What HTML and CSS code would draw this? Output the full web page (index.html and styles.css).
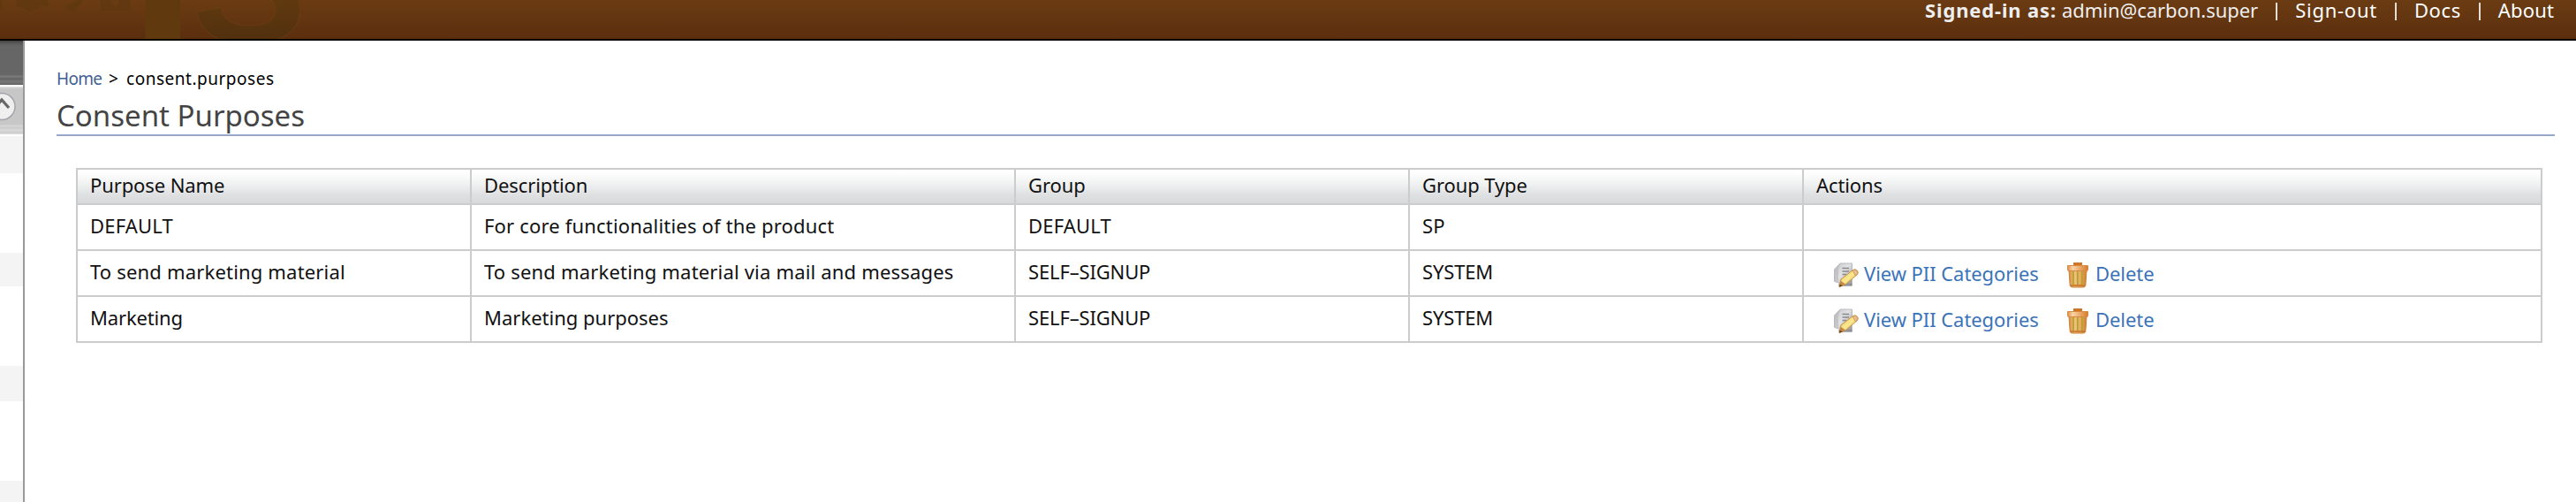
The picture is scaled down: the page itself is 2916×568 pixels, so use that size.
FILE: index.html
```
<!DOCTYPE html>
<html lang="en">
<head>
<meta charset="utf-8">
<title>Consent Purposes</title>
<link rel="stylesheet" href="styles.css">
</head>
<body>
<svg class="defs" width="0" height="0" aria-hidden="true">
  <defs>
    <linearGradient id="paper" x1="0" y1="0" x2="1" y2="1">
      <stop offset="0" stop-color="#c4c5c8"/><stop offset=".45" stop-color="#e2e2e4"/><stop offset="1" stop-color="#8d8f94"/>
    </linearGradient>
    <linearGradient id="pencil" x1="0" y1="0" x2="1" y2="1">
      <stop offset="0" stop-color="#e9c266"/><stop offset=".5" stop-color="#fbe88c"/><stop offset="1" stop-color="#cf9a48"/>
    </linearGradient>
    <linearGradient id="can" x1="0" y1="0" x2="1" y2="0">
      <stop offset="0" stop-color="#d58b3b"/><stop offset=".3" stop-color="#ecc67c"/><stop offset=".7" stop-color="#dfae57"/><stop offset="1" stop-color="#cc7c2e"/>
    </linearGradient>
    <linearGradient id="lid" x1="0" y1="0" x2="1" y2="0">
      <stop offset="0" stop-color="#dc8f4a"/><stop offset=".25" stop-color="#f9d3a6"/><stop offset="1" stop-color="#d67c2b"/>
    </linearGradient>
    <symbol id="icon-edit" viewBox="0 0 30 30">
      <path d="M8 2H21.500V27H8V24.500L1.500 22.500V9Z" fill="url(#paper)" stroke="#b9babd"/>
      <path d="M8 2L1.500 9V22L6 23V9Z" fill="#b4b5b9" opacity=".6"/>
      <path d="M10.500 7.500H18M10.500 11H18M10.500 14.500H15" stroke="#86888c" stroke-width="1.500"/>
      <path d="M6 25H21.500V28H6Z" fill="#77797d" opacity=".45"/>
      <path d="M7 28.500L9 20L22.500 9.500Q25 8 27 10T27.500 14.500L14.500 25.500Z" fill="url(#pencil)" stroke="#c88e42"/>
      <path d="M22 10Q25 8 27 10T27.500 14L25.500 16Z" fill="#e6bd8b" stroke="#c98c4c" stroke-width=".8"/>
      <path d="M7 28.500L8.500 21.500L14 25.500Z" fill="#c4894a"/>
      <path d="M7 28.800L7.800 25.500L10.800 27.500Z" fill="#6d3f1c"/>
    </symbol>
    <symbol id="icon-delete" viewBox="0 0 26 30">
      <path d="M3 10H23L21.800 27Q21.500 29 19 29H7Q4.500 29 4.200 27Z" fill="url(#can)" stroke="#cf8134"/>
      <path d="M8 11V26M12.800 11V26M17.800 11V26" stroke="#bd9b35" stroke-width="1.700"/>
      <path d="M5 27H21" stroke="#c97430" stroke-width="1.600"/>
      <path d="M8 1H18V5H8Z" fill="#cf7526"/>
      <path d="M1.500 4.500H24.500V9Q24.500 10.500 23 10.500H3Q1.500 10.500 1.500 9Z" fill="url(#lid)" stroke="#d88a44"/>
    </symbol>
  </defs>
</svg>

<header class="banner">
  <svg class="watermark" width="400" height="44" viewBox="0 0 400 44" aria-hidden="true">
    <defs>
      <linearGradient id="mark" gradientUnits="userSpaceOnUse" x1="0" y1="0" x2="0" y2="44">
        <stop offset="0" stop-color="#60390f"/><stop offset="1" stop-color="#52300e"/>
      </linearGradient>
    </defs>
    <g fill="#5e380f" fill-opacity=".7" stroke="#744516" stroke-opacity=".3">
      <path d="M-5 0H3V9L-1 15H-5Z"/>
      <path d="M18 -4H55V8L46 7L44 11L38 10L35 15L29 13L27 9L18 9Z"/>
      <path d="M72 6L84 2L88 -3H97L84 13Q78 14 75 10Z"/>
      <path d="M113 -3H148V9Q148 13 144 13H117Q113 13 113 9Z"/>
    </g>
    <path d="M127 -2H135V4L131 9L127 4Z" fill="#683b13"/>
    <text class="mark-i" transform="translate(146 48) scale(2.300 1)">I</text>
    <text class="mark-s" x="217" y="48">S</text>
  </svg>
  <nav class="session">
    <span class="user"><strong>Signed-in as:</strong><span class="account">admin@carbon.super</span></span>
    <i class="bar"></i><a class="sign-out">Sign-out</a>
    <i class="bar"></i><a class="docs">Docs</a>
    <i class="bar"></i><a class="about">About</a>
  </nav>
</header>

<div class="layout">
  <aside class="sidebar">
    <div class="side-head"></div>
    <div class="side-toggle">
      <svg width="26" height="56" viewBox="0 0 26 56">
        <circle cx="2" cy="22.500" r="15" fill="#efefef" stroke="#a5a6ad" stroke-width="1.500"/>
        <path d="M-6 24L2 15L10 24" fill="none" stroke="#666" stroke-width="3.200"/>
      </svg>
    </div>
    <div class="band first"></div>
    <div class="band"></div>
    <div class="band tall"></div>
    <div class="band"></div>
  </aside>

  <main class="content">
    <div class="crumbs"><a class="home">Home</a><span class="sep">&gt;</span><span class="here">consent.purposes</span></div>
    <h1>Consent Purposes</h1>
    <table class="purposes">
      <colgroup><col class="c-name"><col class="c-desc"><col class="c-group"><col class="c-type"><col></colgroup>
      <thead>
        <tr><th>Purpose Name</th><th>Description</th><th>Group</th><th>Group Type</th><th>Actions</th></tr>
      </thead>
      <tbody>
        <tr><td>DEFAULT</td><td>For core functionalities of the product</td><td>DEFAULT</td><td>SP</td><td></td></tr>
        <tr><td>To send marketing material</td><td>To send marketing material via mail and messages</td><td class="caps">SELF–SIGNUP</td><td class="caps">SYSTEM</td>
          <td class="actions"><div class="links"><a class="view"><svg width="30" height="30"><use href="#icon-edit"/></svg>View PII Categories</a><a class="delete"><svg width="26" height="30"><use href="#icon-delete"/></svg>Delete</a></div></td></tr>
        <tr><td class="caps">Marketing</td><td class="short">Marketing purposes</td><td class="caps">SELF–SIGNUP</td><td class="caps">SYSTEM</td>
          <td class="actions"><div class="links"><a class="view"><svg width="30" height="30"><use href="#icon-edit"/></svg>View PII Categories</a><a class="delete"><svg width="26" height="30"><use href="#icon-delete"/></svg>Delete</a></div></td></tr>
      </tbody>
    </table>
  </main>
</div>
</body>
</html>
```
FILE: styles.css
```
* { box-sizing: border-box; }

body {
  margin: 0;
  height: 568px;
  overflow: hidden;
  display: flex;
  flex-direction: column;
  background: #fff;
  color: #111;
  font: 22px "Noto Sans", "Open Sans", sans-serif;
}

.defs { display: block; height: 0; flex: none; }

.banner {
  flex: none;
  height: 46px;
  display: flex;
  justify-content: space-between;
  background: linear-gradient(#6b3c13, #5b2e0e);
  border-bottom: 2px solid #000;
}
.watermark { display: block; }
.mark-i, .mark-s {
  font-family: "Liberation Sans", sans-serif;
  font-weight: 700;
  fill: #59350f;
}
.mark-i { font-size: 120px; }
.mark-s { font-size: 195px; fill: url(#mark); stroke: #744516; stroke-opacity: 0.35; stroke-width: 1.5px; }
.mark-i { fill: url(#mark); }

.session {
  display: flex;
  align-items: flex-start;
  padding-right: 25px;
  color: #fff;
  line-height: 23px;
  white-space: nowrap;
}
.user { display: flex; gap: 6px; color: #eee; }
.user strong { letter-spacing: 0.85px; }
.account { letter-spacing: -0.05px; }
.bar { width: 2px; height: 20px; margin: 3px 20px 0; background: #e6ddd5; }
.sign-out { letter-spacing: 0.75px; }
.docs { letter-spacing: 0.6px; }
.about { letter-spacing: 0.15px; }

.layout { flex: 1; display: flex; min-height: 0; }

.sidebar {
  width: 28px;
  flex: none;
  border-right: 2px solid #999;
  overflow: hidden;
}
.side-head {
  height: 50px;
  background: linear-gradient(#404040 0, #5c5c5c 3px, #666 6px, #666 39px, #757575 39px, #757575 42px, #696969 42px, #696969 45px, #777 45px, #707070 48px, #606060 50px);
}
.side-toggle {
  height: 58px;
  border-top: 2px solid #fff;
  background: linear-gradient(#e0e0e0 0, #c6c6c6 3px, #c8c8c8 43px, #d8d8d8 44px, #cacaca 47px, #dadada 49px, #cdcdcd 52px, #e0e0e0 54px, #fff 54px);
}
.side-toggle svg { display: block; }
.band { height: 38px; margin-bottom: 90px; background: #f4f4f4; }
.band.first { height: 42px; }
.band.tall { height: 40px; }

.content { flex: 1; padding: 30px 24px 0 36px; }

.crumbs {
  display: flex;
  height: 29px;
  font-size: 19px;
  line-height: 26px;
  color: #000;
}
.home { color: #3f5f95; letter-spacing: -0.7px; width: 59px; }
.sep { width: 20px; }
.here { letter-spacing: 0.52px; }

h1 {
  margin: 0;
  height: 49px;
  border-bottom: 2px solid #98a7c9;
  color: #444;
  font-size: 33px;
  font-weight: 400;
  line-height: 52px;
}

.purposes {
  width: 2792px;
  margin: 36px 0 0 22px;
  table-layout: fixed;
  border-spacing: 2px;
  background: #ccc;
  letter-spacing: 0.18px;
}
.c-name, .c-group, .c-type { width: 444px; }
.c-desc { width: 614px; }

th, td { vertical-align: top; text-align: left; font-weight: 400; white-space: nowrap; }
th {
  height: 38px;
  padding: 0 0 3px 14px;
  line-height: 35px;
  letter-spacing: -0.1px;
  background: linear-gradient(#fff 0, #fdfdfd 12%, #eff0f0 45%, #dfe0e2 75%, #d8d9db);
}
td { height: 50px; padding: 0 0 3px 14px; line-height: 47px; background: #fff; }

.caps { letter-spacing: -0.15px; }
.short { letter-spacing: 0; }

.actions { padding: 2px 0 0 33px; color: #3b73b9; letter-spacing: -0.06px; }
.links { display: flex; height: 48px; line-height: 47px; }
.view, .delete { display: flex; }
.view { width: 264px; gap: 5px; }
.delete { gap: 7px; }
.links svg { margin-top: 10px; flex: none; }
```
